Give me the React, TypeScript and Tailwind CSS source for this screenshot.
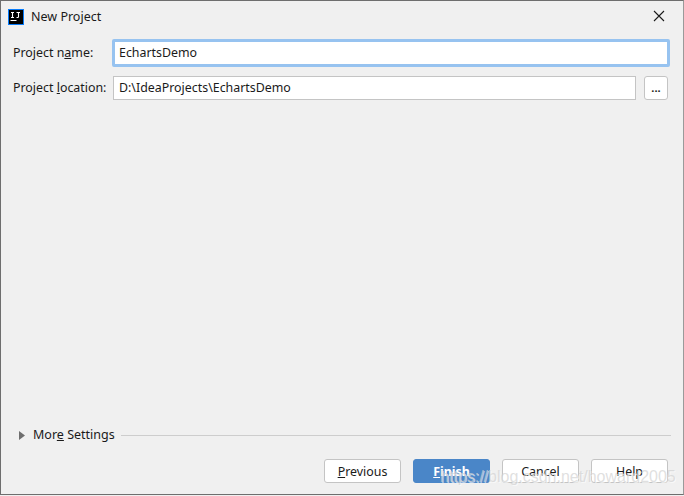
export default function App() {
  const font = { fontFamily: '"Noto Sans", "Open Sans", sans-serif' };
  return (
    <div className="relative w-[684px] h-[496px] overflow-hidden bg-[#f0f0f0] text-[12.4px] leading-[18px] text-[#1a1a1a]" style={font}>
      <div className="flex flex-col h-[495px] border border-[#6e6e6e] border-r-[#9a9a9a]">
        <div className="flex items-center h-[31px] pl-[7px] pr-[18px] shrink-0">
          <svg width="16" height="16" viewBox="0 0 16 16" className="shrink-0">
            <rect x="0" y="0" width="16" height="16" fill="#087cfa" />
            <rect x="1" y="1" width="14" height="14" fill="#000" />
            <rect x="2.5" y="11" width="6" height="1" fill="#fff" />
            <path d="M3 3.5h3M4.5 3.5v5M3 8.5h3M8.5 3.5h3.5M10.5 3.5v4.2q0 .8-.8.8H8.5" stroke="#fff" strokeWidth="1.1" fill="none" />
          </svg>
          <span className="ml-[7px] flex-1 text-[12.5px]">New Project</span>
          <svg width="12" height="12" viewBox="0 0 12 12" className="shrink-0 mb-[1px]">
            <path d="M1 1l10 10M11 1L1 11" stroke="#1a1a1a" strokeWidth="1.1" fill="none" />
          </svg>
        </div>
        <div className="flex flex-col flex-1 pl-[12px] pr-[15px]">
          <div className="flex items-center mt-[7px] h-[28px]">
            <span className="w-[99px] shrink-0">Project n<span className="underline">a</span>me:</span>
            <div className="flex-1 h-[28px] mr-[-2px] flex items-center pl-[4px] bg-white border-[3px] border-[#97c3f0] rounded-[2px]">EchartsDemo</div>
          </div>
          <div className="flex items-center mt-[9px] h-[24px]">
            <span className="w-[100px] shrink-0">Project <span className="underline">l</span>ocation:</span>
            <div className="w-[523px] h-[24px] flex items-center pl-[5px] bg-white border border-[#c4c4c4]">D:\IdeaProjects\EchartsDemo</div>
            <div className="ml-[8px] w-[24px] h-[24px] flex items-center justify-center bg-white border border-[#c4c4c4] rounded-[3px] text-[11px] font-bold">...</div>
          </div>
          <div className="flex-1" />
          <div className="flex items-center h-[18px] mb-[15px]">
            <svg width="6" height="9" viewBox="0 0 6 9" className="ml-[6px] shrink-0"><path d="M0 0l6 4.5-6 4.5z" fill="#6e6e6e" /></svg>
            <span className="ml-[8px] text-[12.5px]">Mor<span className="underline">e</span> Settings</span>
            <div className="flex-1 h-px bg-[#cdcdcd] ml-[6px] mr-[-3px]" />
          </div>
          <div className="flex justify-end gap-[12px] mb-[11px] text-center">
            <div className="w-[77px] h-[24px] pt-[1px] bg-white border border-[#c4c4c4] rounded-[3px] flex items-center justify-center"><span><span className="underline">P</span>revious</span></div>
            <div className="w-[77px] h-[24px] pt-[1px] bg-[#4a86c8] border border-[#4a86c8] rounded-[3px] flex items-center justify-center font-bold text-white"><span><span className="underline">F</span>inish</span></div>
            <div className="w-[77px] h-[24px] pt-[1px] bg-white border border-[#c4c4c4] rounded-[3px] flex items-center justify-center">Cancel</div>
            <div className="w-[77px] h-[24px] pt-[1px] bg-white border border-[#c4c4c4] rounded-[3px] flex items-center justify-center">Help</div>
          </div>
        </div>
      </div>
      <div className="absolute left-[440px] top-[465px] text-[16px] leading-[24px] whitespace-nowrap text-[#d2d2d2]/70 [text-shadow:1px_1px_0_rgba(255,255,255,0.6)]" style={{ fontFamily: '"Liberation Sans", sans-serif' }}>https://blog.csdn.net/howard2005</div>
    </div>
  );
}
